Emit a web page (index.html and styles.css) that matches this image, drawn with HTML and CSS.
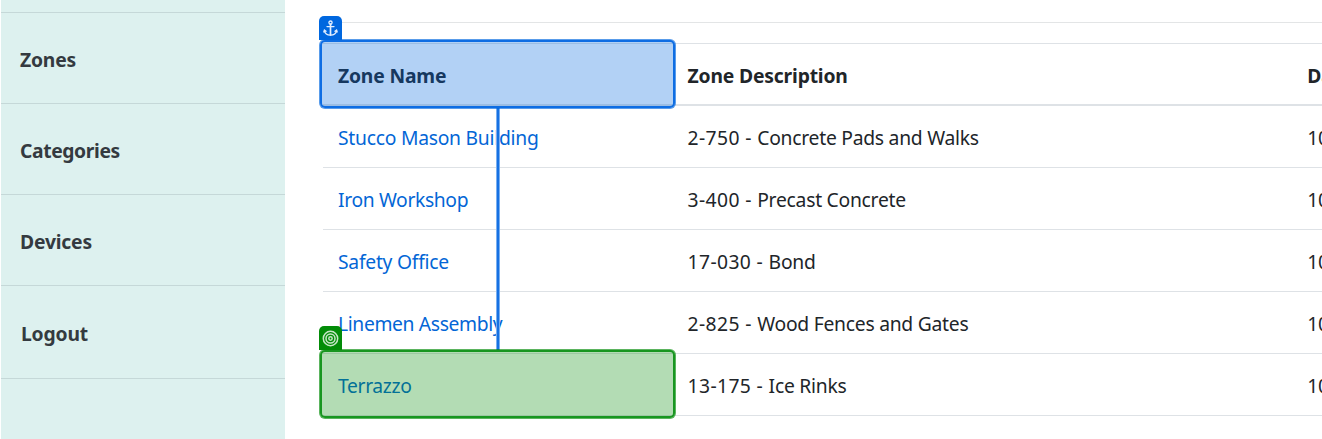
FILE: index.html
```html
<!DOCTYPE html>
<html lang="en">
<head>
<meta charset="utf-8">
<title>Zones</title>
<link rel="stylesheet" href="styles.css">
</head>
<body>
<div class="app">
  <nav class="sidebar">
    <div class="sidebar-top"></div>
    <a class="nav-item">Zones</a>
    <a class="nav-item nav-tight">Categories</a>
    <a class="nav-item">Devices</a>
    <a class="nav-item nav-last">Logout</a>
  </nav>
  <main class="content">
    <hr class="rule">
    <div class="table">
      <div class="row head"><div>Zone Name</div><div>Zone Description</div><div>Date</div></div>
      <div class="row"><a>Stucco Mason Building</a><div><span class="code">2-750 - </span>Concrete Pads and Walks</div><div>10</div></div>
      <div class="row"><a class="tight">Iron Workshop</a><div><span class="code">3-400 - </span>Precast Concrete</div><div>10</div></div>
      <div class="row"><a>Safety Office</a><div><span class="code">17-030 - </span>Bond</div><div>10</div></div>
      <div class="row"><a class="tight">Linemen Assembly</a><div><span class="code">2-825 - </span>Wood Fences and Gates</div><div>10</div></div>
      <div class="row"><a class="tight">Terrazzo</a><div><span class="code">13-175 - </span>Ice Rinks</div><div>10</div></div>
    </div>
  </main>
</div>
<div class="connector"></div>
<div class="mark anchor"></div>
<div class="mark target"></div>
<div class="tab anchor-tab">
  <svg width="15" height="17" viewBox="0 0 15 17" fill="none" stroke="#e3efff" stroke-width="1.3" stroke-linecap="round"><circle cx="7.5" cy="2.6" r="1.6"/><path d="M7.5 4.2V15" stroke-width="1.7"/><path d="M4 6.6h7"/><path d="M1.4 10.6c.5 2.700 3 4.500 6.100 4.500s5.600-1.800 6.100-4.500M.8 12l.6-2 1.700 1.200M14.200 12l-.6-2-1.700 1.200" stroke-width="1.300"/></svg>
</div>
<div class="tab target-tab">
  <svg width="17" height="17" viewBox="0 0 17 17" fill="none" stroke="#c6e6c6" stroke-width="1.5"><circle cx="8.500" cy="8.500" r="7.200"/><circle cx="8.500" cy="8.500" r="4.500"/><circle cx="8.500" cy="8.500" r="1.700"/></svg>
</div>
</body>
</html>
```
FILE: styles.css
```css
* { box-sizing: border-box; }
body {
  margin: 0;
  height: 439px;
  overflow: hidden;
  background: #fff;
  color: #212529;
  font: 19.3px/30px "Noto Sans", "Open Sans", sans-serif;
}
.app { display: flex; width: 100%; height: 439px; overflow: hidden; }
.sidebar {
  flex: 0 0 284px;
  margin-left: 1px;
  background: #ddf1ef;
  color: #343a40;
  font-weight: 700;
  letter-spacing: -.17px;
}
.sidebar-top { height: 13px; border-bottom: 1px solid #c5d8d8; }
.nav-item {
  display: flex;
  align-items: center;
  height: 91px;
  padding: 4px 19px 0;
  border-bottom: 1px solid #c5d8d8;
}
.nav-tight { letter-spacing: -.38px; }
.nav-last { height: 93px; padding-left: 20px; }
.content { flex: 1; min-width: 0; padding: 22px 0 0 38px; }
.rule { height: 1px; margin: 0 0 20px; border: 0; background: #e3e5e6; }
.table { border-top: 1px solid #dee2e6; }
.row {
  display: grid;
  grid-template-columns: 349.6px 619.6px minmax(0, 1fr);
  align-items: center;
  height: 62px;
  border-bottom: 1px solid #dee2e6;
  letter-spacing: -.25px;
}
.row > * { padding: 2px 0 0 15px; white-space: nowrap; }
.row a { color: #0366d6; }
.row .tight { letter-spacing: -.36px; }
.code { letter-spacing: .38px; }
.head { font-weight: 700; border-bottom-width: 2px; letter-spacing: -.17px; }
.head > * { padding-top: 3px; }

.connector {
  position: absolute;
  left: 496px;
  top: 107px;
  width: 4px;
  height: 243px;
  background: #1671e3;
  border: solid #79aff0;
  border-width: 0 1px;
}
.mark {
  position: absolute;
  left: 319px;
  width: 357px;
  border-radius: 6px;
}
.anchor {
  top: 39px;
  height: 70px;
  background: rgba(0, 103, 223, .3);
  border: 1px solid rgba(0, 103, 223, .5);
  box-shadow: inset 0 0 0 2px #0e6de3;
}
.target {
  top: 349px;
  height: 70px;
  background: rgba(3, 140, 8, .3);
  border: 1px solid rgba(3, 140, 8, .5);
  box-shadow: inset 0 0 0 2px #189620;
}
.tab {
  position: absolute;
  left: 319px;
  width: 23px;
  height: 24px;
  display: flex;
  align-items: center;
  justify-content: center;
  border-radius: 5px 5px 0 0;
}
.anchor-tab { top: 16px; background: #0067df; }
.target-tab { top: 326px; background: #038c08; }
```
